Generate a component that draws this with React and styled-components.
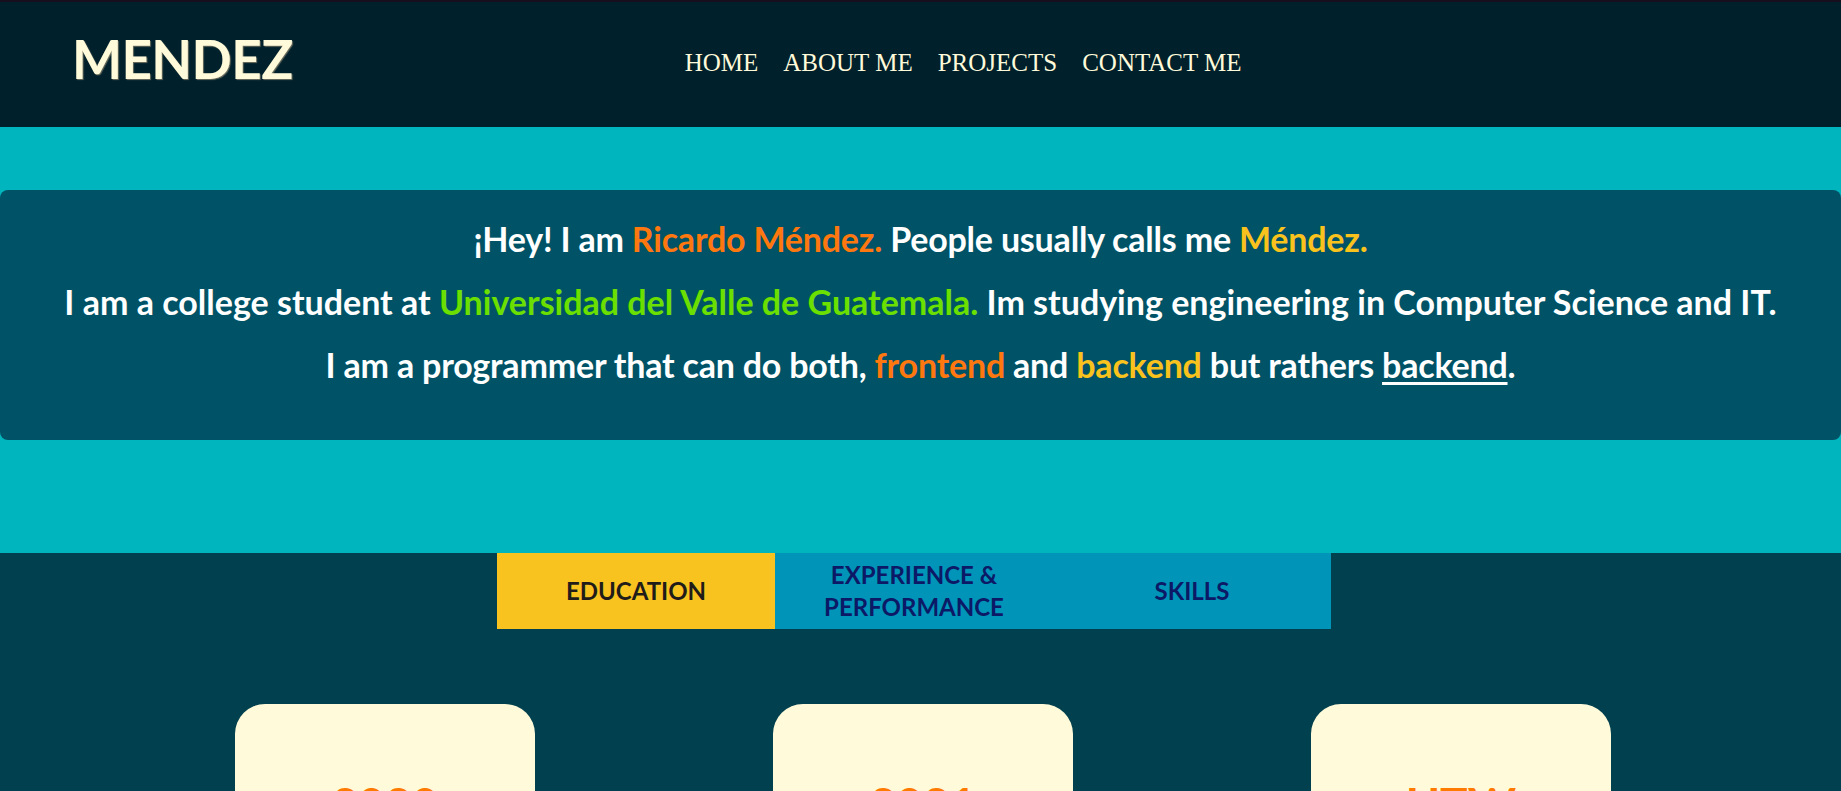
import styled, { createGlobalStyle } from 'styled-components';

const GlobalStyle = createGlobalStyle`
    body {
        margin: 0;
        background: #00404f;
        font-family: "Liberation Serif", serif;
    }
`

function App() {
    return <Page>
        <GlobalStyle />
        <Header>
            <Logo>MENDEZ</Logo>
            <Nav>
                <NavLink>HOME</NavLink>
                <NavLink>ABOUT ME</NavLink>
                <NavLink>PROJECTS</NavLink>
                <NavLink>CONTACT ME</NavLink>
            </Nav>
        </Header>
        <Hero>
            <Intro>
                <Line>¡Hey! I am <Hl $color="#ff770f">Ricardo Méndez.</Hl> People usually calls me <Hl $color="#f9c21c">Méndez.</Hl></Line>
                <Line $wide>I am a college student at <Hl $color="#6be000">Universidad del Valle de Guatemala.</Hl> Im studying engineering in Computer Science and IT.</Line>
                <Line>I am a programmer that can do both, <Hl $color="#ff770f">frontend</Hl> and <Hl $color="#f9c21c">backend</Hl> but rathers <Under>backend</Under>.</Line>
            </Intro>
        </Hero>
        <Lower>
            <Tabs>
                <Tab $active>EDUCATION</Tab>
                <Tab>EXPERIENCE &amp;<br />PERFORMANCE</Tab>
                <Tab>SKILLS</Tab>
            </Tabs>
            <Cards>
                <Card><Year>2020</Year></Card>
                <Card><Year>2021</Year></Card>
                <Card><Year>UTW</Year></Card>
            </Cards>
        </Lower>
    </Page>
}
export default App;

const Page = styled.div`
    min-height: 791px;
    overflow: hidden;
`

const Header = styled.header`
    height: 125px;
    border-top: 2px solid #170f1e;
    background: #00212c;
    display: flex;
    align-items: center;
`

const Logo = styled.h1`
    margin: 0 0 12px 72px;
    font-family: Lato, "Liberation Sans", sans-serif;
    font-weight: 700;
    font-size: 53px;
    color: #fffad9;
    text-shadow: 1px 1px 1px #6f7060;
    letter-spacing: -0.6px;
`

const Nav = styled.nav`
    display: flex;
    gap: 25px;
    margin: 0 0 4px 392px;
`

const NavLink = styled.a`
    font-family: "Liberation Serif", serif;
    font-size: 25px;
    color: #fffad9;
    cursor: pointer;
`

const Hero = styled.section`
    background: #00b5bd;
    padding: 63px 0 113px;
`

const Intro = styled.div`
    background: #005366;
    border-radius: 8px;
    padding: 17px 0 44px;
    text-align: center;
    color: #ffffff;
    font-family: Lato, "Liberation Sans", sans-serif;
    font-weight: 700;
    font-size: 34px;
`

const Line = styled.p`
    margin: 0;
    line-height: 63px;
    letter-spacing: ${p => p.$wide ? '0px' : '-0.2px'};
`

const Hl = styled.span`
    color: ${p => p.$color};
`

const Under = styled.span`
    text-decoration: underline;
    text-decoration-thickness: 3px;
    text-underline-offset: 4px;
`

const Lower = styled.section`
    background: #00404f;
`

const Tabs = styled.div`
    display: grid;
    grid-template-columns: repeat(3, 278px);
    height: 76px;
    margin-left: 497px;
`

const Tab = styled.div`
    display: flex;
    align-items: center;
    justify-content: center;
    text-align: center;
    background: ${p => p.$active ? '#f9c31f' : '#0094b8'};
    color: ${p => p.$active ? '#1f1c19' : '#0c1966'};
    font-family: Lato, "Liberation Sans", sans-serif;
    font-weight: 700;
    font-size: 24px;
    line-height: 32px;
`

const Cards = styled.div`
    display: flex;
    gap: 238px;
    padding: 75px 0 0 235px;
`

const Card = styled.div`
    flex: 0 0 300px;
    height: 320px;
    background: #fffad9;
    border-radius: 30px;
    padding-top: 72px;
    box-sizing: border-box;
    text-align: center;
`

const Year = styled.h2`
    margin: 0;
    font-family: Lato, "Liberation Sans", sans-serif;
    font-weight: 700;
    font-size: 46px;
    color: #ff7a00;
`
